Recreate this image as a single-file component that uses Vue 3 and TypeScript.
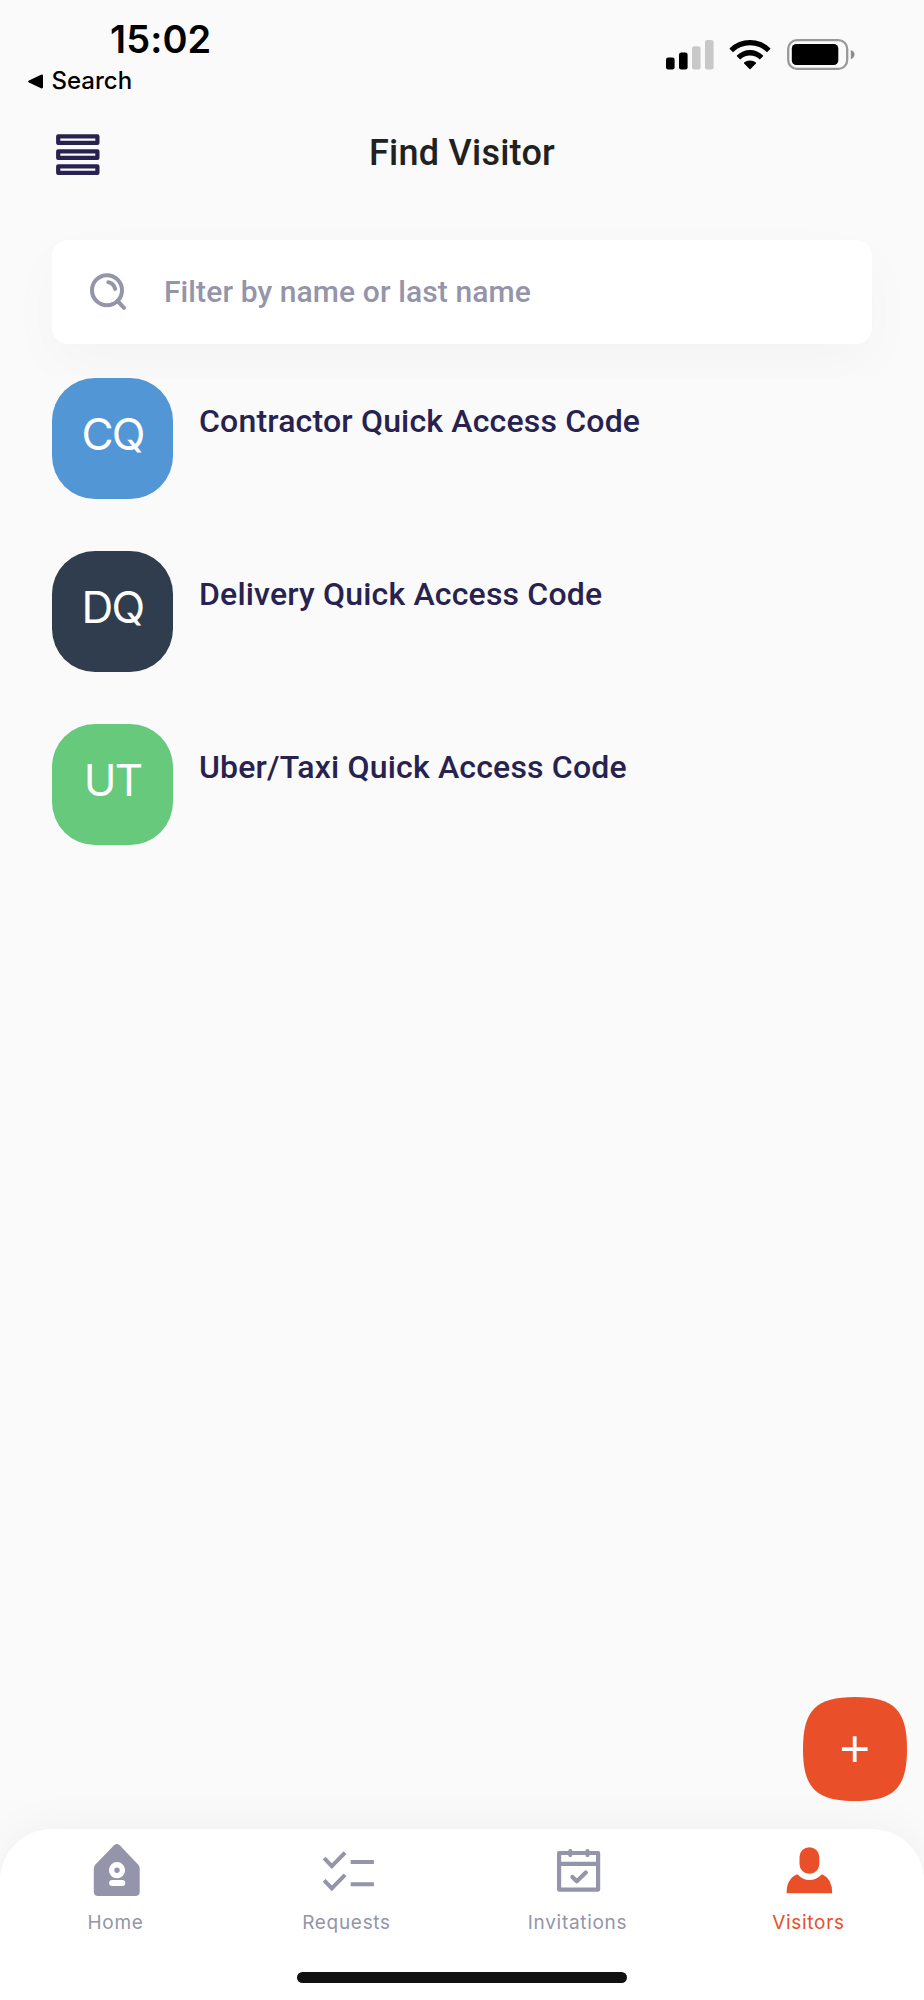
<script setup lang="ts">
interface Visitor {
  initials: string
  name: string
  tone: string
}

interface Tab {
  id: string
  label: string
}

const visitors: Visitor[] = [
  { initials: 'CQ', name: 'Contractor Quick Access Code', tone: 'blue' },
  { initials: 'DQ', name: 'Delivery Quick Access Code', tone: 'slate' },
  { initials: 'UT', name: 'Uber/Taxi Quick Access Code', tone: 'green' },
]

const tabs: Tab[] = [
  { id: 'home', label: 'Home' },
  { id: 'requests', label: 'Requests' },
  { id: 'invitations', label: 'Invitations' },
  { id: 'visitors', label: 'Visitors' },
]
const activeTab = 'visitors'
</script>

<template>
  <div class="screen">
    <div class="status">
      <div class="status-left">
        <div class="time">15:02</div>
        <div class="back">
          <svg width="15" height="15" viewBox="0 0 15 15">
            <path d="M1 6.6 13 .8Q15 .1 15 2V13Q15 14.9 13 14.2L1 8.4Q-.8 7.5 1 6.6Z" fill="#000" />
          </svg>
          <span>Search</span>
        </div>
      </div>
      <div class="status-right">
        <svg class="signal" width="48" height="30" viewBox="0 0 48 30">
          <rect x="0" y="17.5" width="8.6" height="12" rx="2.2" fill="#000" />
          <rect x="13" y="12.5" width="8.6" height="17" rx="2.2" fill="#000" />
          <rect x="26" y="6.3" width="8.6" height="23.2" rx="2.2" fill="#c8c8c8" />
          <rect x="39" y="0" width="8.6" height="29.5" rx="2.2" fill="#c8c8c8" />
        </svg>
        <svg class="wifi" width="42" height="31" viewBox="0 0 42 31">
          <path d="M0.7 9.2A29 29 0 0 1 41.3 9.2Q41.6 9.6 41.3 10L38 13.2A24.3 24.3 0 0 0 4 13.2L.7 10Q.4 9.6.7 9.2Z" />
          <path d="M7.9 16.4A18.8 18.8 0 0 1 34.1 16.4Q34.4 16.8 34.1 17.2L30.8 20.4A14 14 0 0 0 11.2 20.4L7.9 17.2Q7.6 16.8 7.9 16.4Z" />
          <path d="M15.1 23.6A9 9 0 0 1 26.9 23.6Q27.2 24 26.9 24.4L21.5 30Q21 30.4 20.5 30L15.1 24.4Q14.8 24 15.1 23.6Z" />
        </svg>
        <svg class="battery" width="68" height="32" viewBox="0 0 68 32">
          <rect x="1.2" y="1.2" width="59" height="28.6" rx="8.8" fill="none" stroke="#999" stroke-width="2.3" />
          <rect x="4.8" y="5" width="46.5" height="21" rx="4.6" fill="#000" />
          <path d="M63.8 11Q67.5 12.3 67.5 15.5T63.8 20.2Z" fill="#8c8c8c" />
        </svg>
      </div>
    </div>

    <header class="header">
      <svg class="menu" width="44" height="42" viewBox="0 0 44 42" fill="none" stroke="#27224f" stroke-width="4.2" stroke-linejoin="round">
        <rect x="2.2" y="2.3" width="39.2" height="6.6" />
        <rect x="2.2" y="17.3" width="39.2" height="6.6" />
        <rect x="2.2" y="32.3" width="39.2" height="6.6" />
      </svg>
      <h1>Find Visitor</h1>
    </header>

    <div class="search">
      <svg width="38" height="38" viewBox="0 0 38 38" fill="none" stroke="#9494ab" stroke-width="4" stroke-linecap="round">
        <circle cx="18" cy="17.2" r="15" />
        <path d="M28.5 28 35 34.8M19.3 9.2Q24.8 10.2 26.2 15.9" />
      </svg>
      <span>Filter by name or last name</span>
    </div>

    <main class="list">
      <div v-for="v in visitors" :key="v.initials" class="row">
        <div class="avatar" :class="v.tone">{{ v.initials }}</div>
        <div class="name">{{ v.name }}</div>
      </div>
    </main>

    <button class="fab" aria-label="Add visitor">
      <svg width="104" height="104" viewBox="0 0 104 104">
        <path d="M52 0C91 0 104 13 104 52S91 104 52 104 0 91 0 52 13 0 52 0Z" fill="#e94f28" />
        <path d="M51.7 39.3V65M38.9 52.2H64.6" stroke="#fff" stroke-width="3.8" />
      </svg>
    </button>

    <nav class="tabs">
      <div class="tab-row">
        <div v-for="t in tabs" :key="t.id" class="tab" :class="{ active: t.id === activeTab }">
          <svg v-if="t.id === 'home'" width="56" height="56" viewBox="0 0 56 56">
            <path d="M26.1 1.2Q28.9 -1.3 31.7 1.2L50.1 20.5Q51.7 22.2 51.7 24.7V47.5Q51.7 52 47.3 52H10.2Q5.8 52 5.8 47.5V24.7Q5.8 22.2 7.4 20.5Z" fill="currentColor" />
            <circle cx="29" cy="26.2" r="5.4" fill="none" stroke="#fff" stroke-width="5.4" />
            <rect x="21.1" y="36" width="16.2" height="6" rx="3" fill="#fff" />
          </svg>
          <svg v-else-if="t.id === 'requests'" width="56" height="56" viewBox="0 0 56 56" fill="none" stroke="currentColor" stroke-width="4">
            <path d="M5.2 14.2 12.8 22.2 26.1 8.6M5.2 36.4 12.8 44.4 26.1 30.8M31.7 18H54.9M31.7 40.3H54.9" />
          </svg>
          <svg v-else-if="t.id === 'invitations'" width="56" height="56" viewBox="0 0 56 56" fill="none" stroke="currentColor" stroke-width="4.2" stroke-linecap="round" stroke-linejoin="round">
            <path d="M9.1 9H48.1V45.6H9.1ZM9.2 19.8H48M20.3 7V11.1M37.5 7V11.1M22.4 33 26.8 37.2 35.8 28.6" />
          </svg>
          <svg v-else width="56" height="56" viewBox="0 0 56 56" fill="currentColor">
            <rect x="18.5" y="3.2" width="19.8" height="26.6" rx="9.9" />
            <path d="M16.2 30.2Q28.5 42 41 30.2 51.2 34.4 51.2 49.2H5.6Q5.6 34.4 16.2 30.2Z" />
          </svg>
          <span>{{ t.label }}</span>
        </div>
      </div>
      <div class="home-indicator"></div>
    </nav>
  </div>
</template>

<style>
body {
  background: #fafafa;
}
</style>

<style scoped>
.screen {
  position: relative;
  display: flex;
  flex-direction: column;
  width: 924px;
  height: 2000px;
  overflow: hidden;
  background: #fafafa;
  font-family: Roboto, "Liberation Sans", sans-serif;
}
.status {
  display: flex;
  justify-content: space-between;
  height: 110px;
  color: #000;
  font-family: Inter, "Liberation Sans", sans-serif;
}
.time {
  padding: 16px 0 0 110px;
  font-size: 38px;
  line-height: 46px;
  font-weight: 600;
  letter-spacing: 0.1px;
}
.back {
  display: flex;
  align-items: center;
  gap: 8.5px;
  padding: 4px 0 0 28px;
  font-size: 24px;
  line-height: 30px;
  font-weight: 450;
}
.status-right {
  display: flex;
  align-items: flex-start;
  padding: 39px 69.5px 0 0;
}
.signal {
  margin-top: 1px;
}
.wifi {
  margin-left: 15.5px;
}
.battery {
  margin-left: 15.5px;
}
.header {
  display: grid;
  grid-template-columns: 1fr auto 1fr;
  align-items: start;
  height: 130px;
  padding: 0 56px;
}
.menu {
  margin-top: 24px;
}
h1 {
  margin: 22px 0 0;
  color: #212121;
  font-size: 36px;
  line-height: 43px;
  font-weight: 500;
  letter-spacing: 0.25px;
}
.search {
  display: flex;
  flex: none;
  align-items: center;
  gap: 37px;
  height: 104px;
  margin: 0 52px;
  padding-left: 37px;
  border-radius: 16px;
  background: #fff;
  box-shadow: 0 20px 56px rgba(20, 20, 40, 0.028);
  color: #9494ab;
  font-size: 30px;
  font-weight: 500;
  letter-spacing: 0.1px;
}
.search span {
  padding-bottom: 2px;
}
.list {
  position: relative;
  display: flex;
  flex-direction: column;
  gap: 52px;
  margin-top: 33px;
  padding: 1px 52px 0;
  background: #fafafa;
}
.row {
  display: flex;
  gap: 26px;
}
.avatar {
  width: 121px;
  height: 121px;
  border-radius: 43px;
  color: #fff;
  font-family: Inter, "Liberation Sans", sans-serif;
  font-size: 44px;
  line-height: 113px;
  font-weight: 400;
  letter-spacing: -1.8px;
  text-align: center;
}
.blue {
  background: #5296d5;
}
.slate {
  background: #303d4e;
}
.green {
  background: #66c97b;
}
.name {
  padding-top: 24px;
  color: #27224f;
  font-size: 32px;
  line-height: 38px;
  font-weight: 500;
  letter-spacing: 0.18px;
}
.fab {
  position: absolute;
  right: 17px;
  bottom: 199px;
  z-index: 1;
  width: 104px;
  height: 104px;
  padding: 0;
  border: 0;
  background: none;
}
.fab svg {
  display: block;
}
.tabs {
  display: flex;
  flex-direction: column;
  align-items: center;
  height: 171px;
  margin-top: auto;
  border-radius: 52px 52px 0 0;
  background: #fff;
  box-shadow: 0 -4px 44px rgba(0, 0, 0, 0.04);
}
.tab-row {
  display: grid;
  grid-template-columns: repeat(4, 1fr);
  width: 100%;
  height: 143px;
}
.tab {
  display: flex;
  flex-direction: column;
  align-items: center;
  padding-top: 15px;
  color: #9494ab;
  font-family: Inter, "Liberation Sans", sans-serif;
  font-size: 19px;
  line-height: 24px;
  letter-spacing: 0.7px;
}
.tab span {
  margin-top: 11px;
}
.active {
  color: #e94f28;
}
.home-indicator {
  width: 330px;
  height: 11px;
  border-radius: 6px;
  background: #111;
}
</style>
